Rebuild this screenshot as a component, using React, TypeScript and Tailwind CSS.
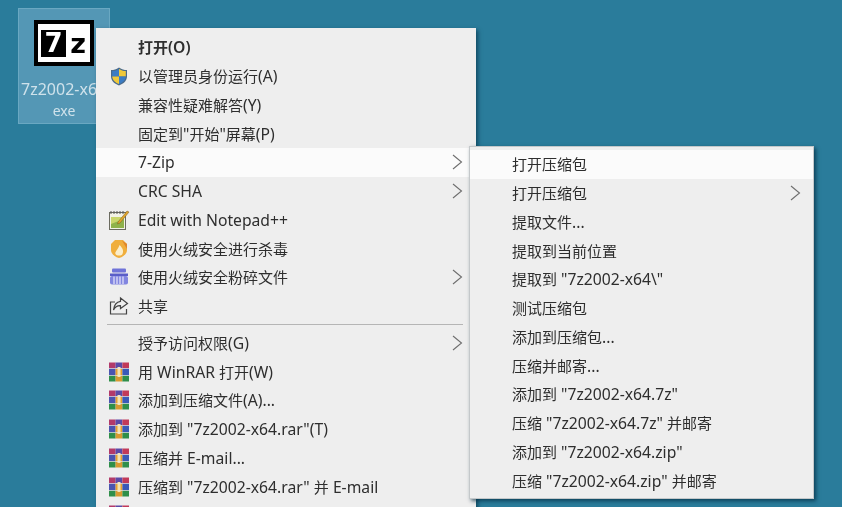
import React from "react";

const font = { fontFamily: '"Noto Sans", "Noto Sans CJK SC", sans-serif' };

function Shield() {
  return (
    <svg width="20" height="21" viewBox="0 0 20 20">
      <path d="M10 1 C7 3 5 3.5 2 3.5 L2 10 C2 14.5 6 17.5 10 19 C14 17.5 18 14.5 18 10 L18 3.5 C15 3.5 13 3 10 1Z" fill="#4a6a8a" />
      <path d="M10 2.5 C8 3.8 6 4.5 3.2 4.6 L3.2 10 L10 10Z" fill="#3b7cc4" />
      <path d="M10 2.5 C12 3.8 14 4.5 16.8 4.6 L16.8 10 L10 10Z" fill="#f0c93a" />
      <path d="M3.2 10 C3.4 13.8 6.6 16.3 10 17.6 L10 10Z" fill="#f0c93a" />
      <path d="M16.8 10 C16.6 13.8 13.4 16.3 10 17.6 L10 10Z" fill="#3b7cc4" />
    </svg>
  );
}

function Notepad() {
  return (
    <svg width="22" height="22" viewBox="0 0 22 22">
      <rect x="1.5" y="3.5" width="16" height="17" fill="#f2f2e6" stroke="#6b6b60" />
      <rect x="3" y="8" width="13" height="11" fill="#c9d66b" />
      <path d="M3 15 L16 10 L16 19 L3 19Z" fill="#8fb24a" />
      <path d="M3 2 V5 M6 2 V5 M9 2 V5 M12 2 V5 M15 2 V5" stroke="#555" strokeWidth="1" />
      <path d="M10 13 L19 2 L21 3 L12 14 L9.5 15Z" fill="#e2a52c" stroke="#7a5a20" strokeWidth="0.5" />
    </svg>
  );
}

function Fire() {
  return (
    <svg width="20" height="20" viewBox="0 0 20 20">
      <path d="M6 1 L14 1 L18 5 L18 11 C18 15 14 18 10 19 C6 18 2 15 2 11 L2 5Z" fill="#f0ae3c" />
      <path d="M10.5 6 C13.5 9 15 11.5 13.5 15 C12.5 17 7.5 17 6.5 15 C5.5 13 8.5 11.5 10.5 6Z" fill="#fbeecb" />
      <path d="M13 1.5 L18 5 L18 10Z" fill="#e0862a" />
    </svg>
  );
}

function Shredder() {
  return (
    <svg width="20" height="20" viewBox="0 0 20 20">
      <rect x="3" y="1.5" width="14" height="4" rx="1" fill="#6f73d8" />
      <rect x="1" y="6.5" width="18" height="2.5" fill="#5a5ec8" />
      <rect x="1" y="9" width="18" height="8.5" rx="2" fill="#8286e0" />
      <path d="M5 9.5 V17 M8 9.5 V17 M11 9.5 V17 M14 9.5 V17" stroke="#e6e6fa" strokeWidth="1.2" />
    </svg>
  );
}

function Share() {
  return (
    <svg width="20" height="20" viewBox="0 0 20 20" fill="none" stroke="#444" strokeWidth="1.2">
      <path d="M6 6 H1.5 V18 H17.5 V13" />
      <path d="M11.5 2 L18.5 7.5 L11.5 12.5 V9.7 C8.5 9.5 6 11 4.5 14 C5 9.5 7.5 5.8 11.5 5.3Z" />
    </svg>
  );
}

function Rar() {
  return (
    <svg width="20" height="20" viewBox="0 0 20 20">
      <rect x="0" y="0.5" width="6.6" height="6" fill="#b23a6a" />
      <rect x="6.6" y="0.5" width="6.8" height="6" fill="#5a4aa8" />
      <rect x="13.4" y="0.5" width="6.6" height="6" fill="#c23a5a" />
      <rect x="0" y="6.5" width="6.6" height="7" fill="#4a55b0" />
      <rect x="6.6" y="6.5" width="6.8" height="7" fill="#e8a030" />
      <rect x="13.4" y="6.5" width="6.6" height="7" fill="#3a5ab8" />
      <rect x="0" y="13.5" width="6.6" height="6" fill="#2f8f4a" />
      <rect x="6.6" y="13.5" width="6.8" height="6" fill="#d89a30" />
      <rect x="13.4" y="13.5" width="6.6" height="6" fill="#2f8f4a" />
      <rect x="8.5" y="5" width="3" height="10" fill="#f3e3b0" />
      <path d="M0 6.5 H20 M0 13.5 H20" stroke="#e8e8e8" strokeWidth="0.6" />
    </svg>
  );
}

function Chevron() {
  return (
    <svg width="11" height="16" viewBox="0 0 11 16" fill="none" stroke="#6e6e6e" strokeWidth="1.1">
      <path d="M1 1 L9.5 8 L1 15" />
    </svg>
  );
}

type Item = { label: string; icon?: React.ReactNode; arrow?: boolean; hover?: boolean; bold?: boolean };

// Latin runs are set a little larger than the CJK runs, as in the reference's font pairing.
function Label({ text }: { text: string }) {
  const parts = text.match(/[\x00-\x7f]+|[^\x00-\x7f]+/g) ?? [];
  return (
    <>
      {parts.map((p, i) =>
        /^[\x00-\x7f]/.test(p) ? (
          <span key={i} className="text-[15.7px]">{p}</span>
        ) : (
          <span key={i}>{p}</span>
        )
      )}
    </>
  );
}

function Row({ item, iconSlot, arrowClass }: { item: Item; iconSlot: string; arrowClass: string }) {
  return (
    <div className={`flex h-[28.75px] items-center ${item.hover ? "bg-[#fbfbfb]" : ""}`}>
      <div className={`flex shrink-0 items-center justify-center ${iconSlot}`}>{item.icon}</div>
      <span className={`flex-1 whitespace-pre text-[15px] leading-[20px] text-[#2e2e2e] ${item.bold ? "font-semibold" : ""}`}>
        <Label text={item.label} />
      </span>
      {item.arrow && <div className={`flex shrink-0 items-center ${arrowClass}`}><Chevron /></div>}
    </div>
  );
}

const groupA: Item[] = [
  { label: "打开(O)", bold: true },
  { label: "以管理员身份运行(A)", icon: <Shield /> },
  { label: "兼容性疑难解答(Y)" },
  { label: "固定到\"开始\"屏幕(P)" },
  { label: "7-Zip", arrow: true, hover: true },
  { label: "CRC SHA", arrow: true },
  { label: "Edit with Notepad++", icon: <Notepad /> },
  { label: "使用火绒安全进行杀毒", icon: <Fire /> },
  { label: "使用火绒安全粉碎文件", icon: <Shredder />, arrow: true },
  { label: "共享", icon: <Share /> },
];

const groupB: Item[] = [
  { label: "授予访问权限(G)", arrow: true },
  { label: "用 WinRAR 打开(W)", icon: <Rar /> },
  { label: "添加到压缩文件(A)...", icon: <Rar /> },
  { label: "添加到 \"7z2002-x64.rar\"(T)", icon: <Rar /> },
  { label: "压缩并 E-mail...", icon: <Rar /> },
  { label: "压缩到 \"7z2002-x64.rar\" 并 E-mail", icon: <Rar /> },
  { label: "", icon: <Rar /> },
];

const sub: Item[] = [
  { label: "打开压缩包", hover: true },
  { label: "打开压缩包", arrow: true },
  { label: "提取文件..." },
  { label: "提取到当前位置" },
  { label: "提取到 \"7z2002-x64\\\"" },
  { label: "测试压缩包" },
  { label: "添加到压缩包..." },
  { label: "压缩并邮寄..." },
  { label: "添加到 \"7z2002-x64.7z\"" },
  { label: "压缩 \"7z2002-x64.7z\" 并邮寄" },
  { label: "添加到 \"7z2002-x64.zip\"" },
  { label: "压缩 \"7z2002-x64.zip\" 并邮寄" },
];

export default function App() {
  return (
    <div className="relative h-[507px] w-[842px] overflow-hidden bg-[#2a7c9b] blur-[0.5px]" style={font}>
      {/* desktop icon */}
      <div className="absolute left-[18px] top-[8px] flex h-[116px] w-[92px] flex-col items-center border border-[#6aa8c2] bg-[#5497b5] pt-[11px]">
        <div className="flex h-[46px] w-[60px] items-center justify-center gap-[3px] border-[4px] border-black bg-white">
          <div className="flex h-[27px] w-[25px] items-center justify-center bg-black text-[26px] font-bold leading-none text-white" style={{ fontFamily: '"DejaVu Sans", sans-serif' }}>7</div>
          <div className="flex h-[27px] w-[18px] items-center justify-center text-[27px] font-bold leading-none text-black" style={{ fontFamily: '"DejaVu Sans", sans-serif' }}>z</div>
        </div>
        <div className="mt-[11px] w-full overflow-hidden whitespace-nowrap pl-[2px] text-left text-[16px] leading-[24px] text-[#cfe2eb]">7z2002-x64.</div>
        <div className="text-[14px] leading-[20px] text-[#cfe2eb]">exe</div>
      </div>

      {/* main context menu */}
      <div className="absolute left-[96px] top-[28px] w-[380px] bg-[#eeeeee] pt-[5px] shadow-[2px_2px_4px_rgba(0,40,60,0.6)]">
        {groupA.map((item, i) => (
          <Row key={i} item={item} iconSlot="w-[42px] pl-[3px]" arrowClass="pr-[13px]" />
        ))}
        <div className="ml-[11px] mr-[13px] mb-[4px] mt-[3px] h-[1px] bg-[#b5b5b5]" />
        {groupB.map((item, i) => (
          <Row key={i} item={item} iconSlot="w-[42px] pl-[3px]" arrowClass="pr-[13px]" />
        ))}
      </div>

      {/* 7-Zip submenu */}
      <div className="absolute left-[469px] top-[146px] w-[345px] border border-[#c4c8ca] bg-[#eeeeee] pb-[3px] pt-[3px] shadow-[2px_2px_4px_rgba(0,40,60,0.7)]">
        {sub.map((item, i) => (
          <Row key={i} item={item} iconSlot="w-[42px]" arrowClass="pr-[12px]" />
        ))}
      </div>
    </div>
  );
}
